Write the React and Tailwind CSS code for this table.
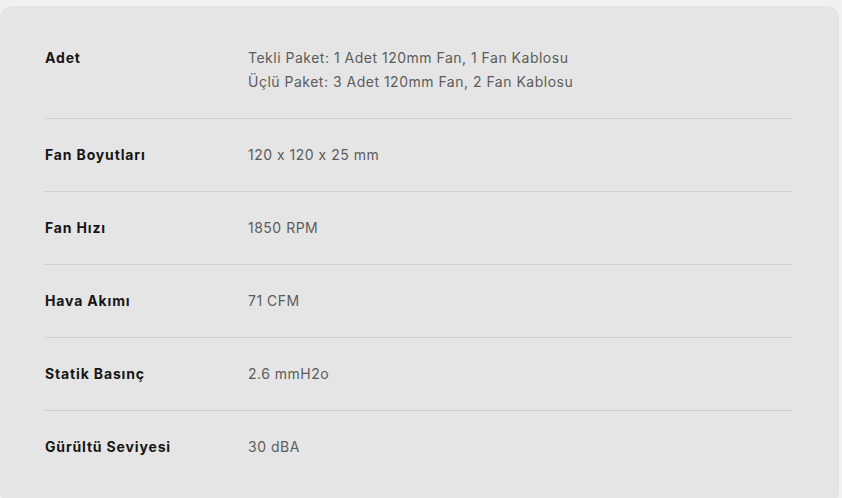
import React from 'react';

// spec rows for the fan
const specs = [
  { label: 'Adet', value: ['Tekli Paket: 1 Adet 120mm Fan, 1 Fan Kablosu', 'Üçlü Paket: 3 Adet 120mm Fan, 2 Fan Kablosu'] },
  { label: 'Fan Boyutları', value: ['120 x 120 x 25 mm'] },
  { label: 'Fan Hızı', value: ['1850 RPM'] },
  { label: 'Hava Akımı', value: ['71 CFM'] },
  { label: 'Statik Basınç', value: ['2.6 mmH2o'] },
  { label: 'Gürültü Seviyesi', value: ['30 dBA'] },
];

export default function App() {
  return (
    <main className="w-[842px] h-[498px] bg-[#f1f1f1] pt-[6px] pr-[3px] overflow-hidden font-['Inter',sans-serif] [font-feature-settings:'calt'_0]">
      <div className="h-[498px] bg-[#e5e5e5] rounded-[12px] px-[45px] pt-4 pr-[47px]">
        {specs.map((row, i) => (
          <div
            key={row.label}
            className={`flex items-start py-6 ${i < specs.length - 1 ? 'border-b border-[#cfcfcf]' : ''}`}
          >
            <div className="w-[203px] shrink-0 text-[14px] leading-6 font-bold tracking-[0.85px] text-[#161616]">{row.label}</div>
            <div className="text-[14px] leading-6 tracking-[0.5px] text-[#5c5c5c]">
              {row.value.map((v) => (
                <div key={v}>{v}</div>
              ))}
            </div>
          </div>
        ))}
      </div>
    </main>
  );
}
